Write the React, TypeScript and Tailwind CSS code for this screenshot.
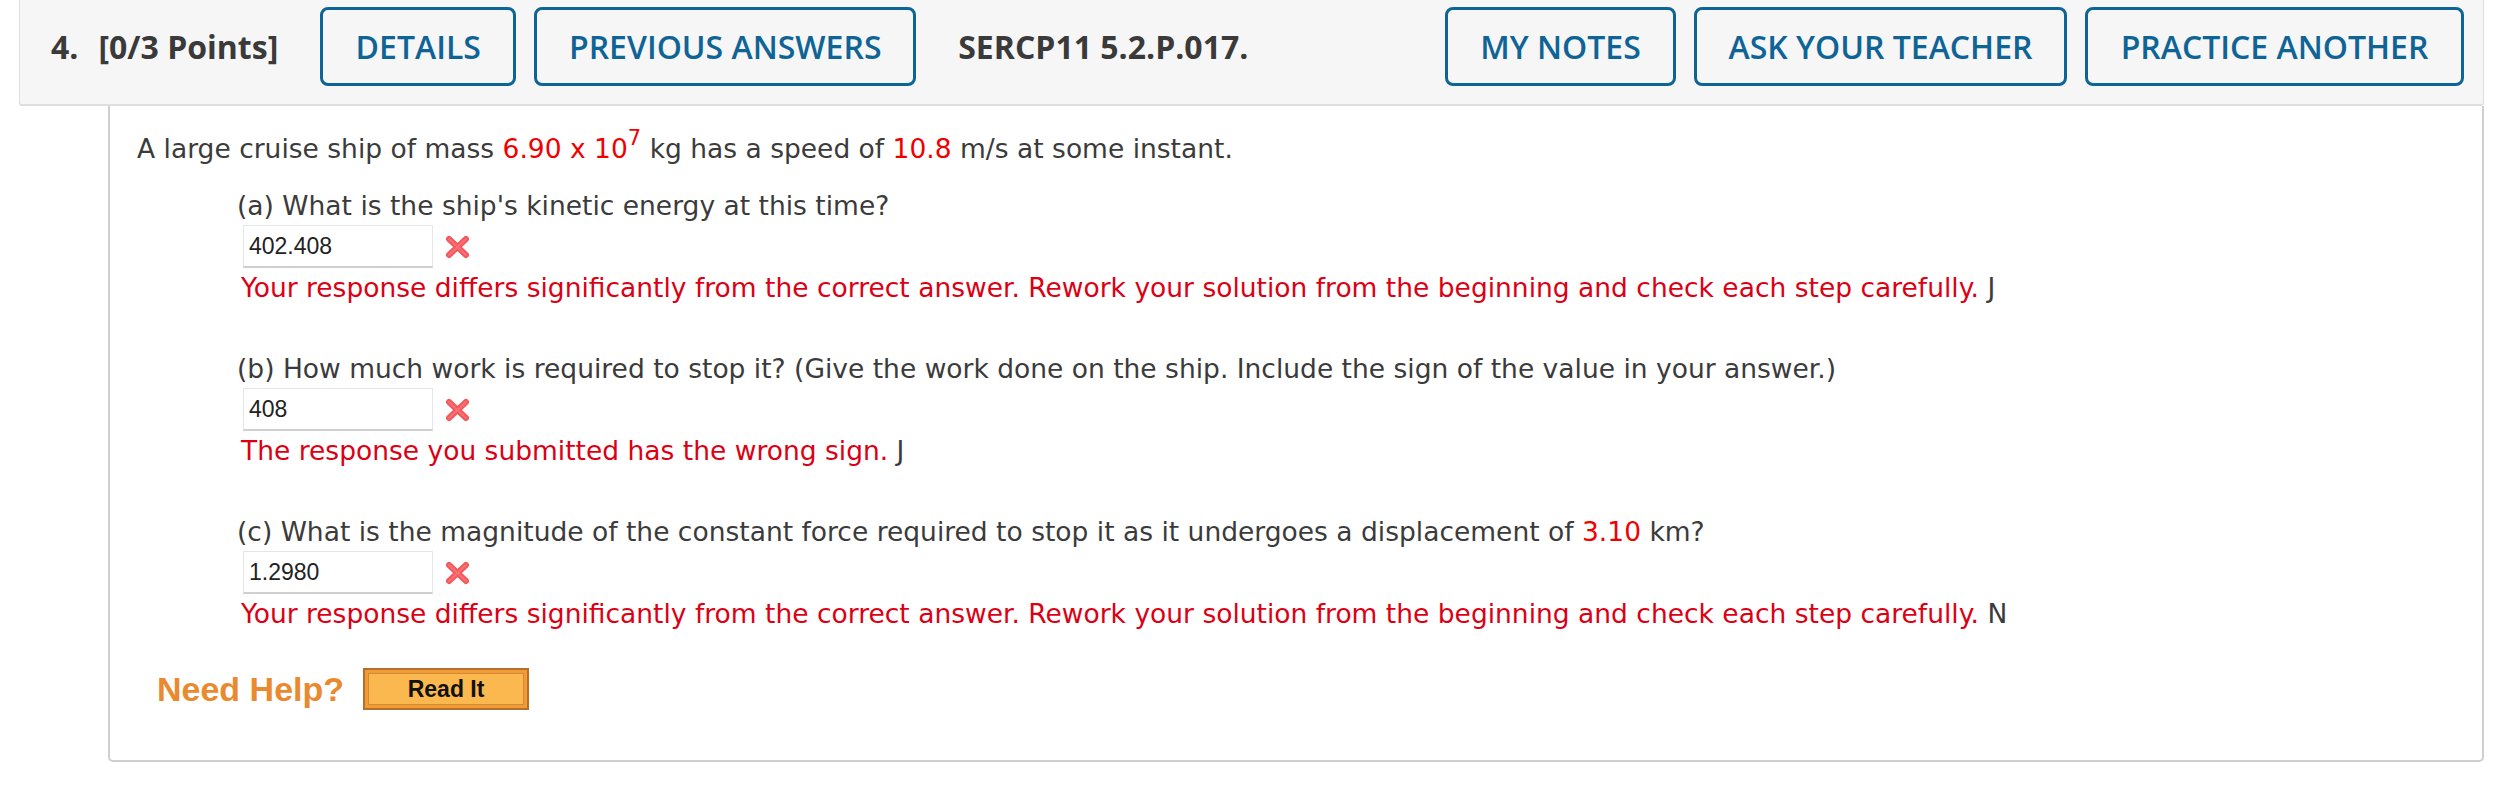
import React from "react";

function CrossMark() {
  return (
    <svg width="27" height="24" viewBox="0 0 27 24" className="shrink-0">
      <path d="M5 4 L22 20 M22 4 L5 20" stroke="#f2585c" strokeWidth="6" strokeLinecap="round" />
      <path d="M5 4 L22 20 M22 4 L5 20" stroke="#ff8a8c" strokeWidth="2" strokeLinecap="round" opacity="0.5" />
    </svg>
  );
}

function HeaderButton({ label, width }: { label: string; width: string }) {
  return (
    <div
      className={`${width} h-[79px] shrink-0 flex items-center justify-center border-[3px] border-[#0f6496] rounded-[8px] text-[#0f6496] text-[32px] font-semibold`}
    >
      {label}
    </div>
  );
}

interface Part {
  question: React.ReactNode;
  answer: string;
  feedback: string;
  unit: string;
}

const parts: Part[] = [
  {
    question: "(a) What is the ship's kinetic energy at this time?",
    answer: "402.408",
    feedback:
      "Your response differs significantly from the correct answer. Rework your solution from the beginning and check each step carefully.",
    unit: "J",
  },
  {
    question:
      "(b) How much work is required to stop it? (Give the work done on the ship. Include the sign of the value in your answer.)",
    answer: "408",
    feedback: "The response you submitted has the wrong sign.",
    unit: "J",
  },
  {
    question: (
      <>
        (c) What is the magnitude of the constant force required to stop it as it undergoes a displacement of{" "}
        <span className="text-[#f20000]">3.10</span> km?
      </>
    ),
    answer: "1.2980",
    feedback:
      "Your response differs significantly from the correct answer. Rework your solution from the beginning and check each step carefully.",
    unit: "N",
  },
];

export default function App() {
  return (
    <div className="w-[2516px] h-[790px] bg-white overflow-hidden [font-family:'DejaVu_Sans',Verdana,sans-serif]">
      {/* question header */}
      <div className="ml-[19px] mr-[32px] h-[106px] bg-[#f6f6f6] border-x border-b-2 border-[#dedede] rounded-bl-[3px] rounded-br-[3px] flex items-start pt-[7px] pl-[31px] pr-[19px] [font-family:'Open_Sans',sans-serif]">
        <div className="flex items-center h-[79px]">
          <span className="text-[32px] font-bold text-[#3a3a3a]">4.</span>
          <span className="ml-[20px] text-[32px] font-bold text-[#3a3a3a]">[0/3 Points]</span>
          <div className="ml-[42px] flex gap-[18px]">
            <HeaderButton label="DETAILS" width="w-[196px]" />
            <HeaderButton label="PREVIOUS ANSWERS" width="w-[382px]" />
          </div>
          <span className="ml-[42px] text-[32px] font-bold text-[#3a3a3a]">SERCP11 5.2.P.017.</span>
        </div>
        <div className="ml-auto flex gap-[18px]">
          <HeaderButton label="MY NOTES" width="w-[231px]" />
          <HeaderButton label="ASK YOUR TEACHER" width="w-[373px]" />
          <HeaderButton label="PRACTICE ANOTHER" width="w-[379px]" />
        </div>
      </div>

      {/* question body */}
      <div className="ml-[108px] mr-[32px] h-[656px] border-x-2 border-b-2 border-[#cfcfcf] rounded-b-[5px] pl-[27px] pt-[26px] text-[26.5px] leading-[34px] text-[#3b3b3b]">
        <p>
          A large cruise ship of mass <span className="text-[#f20000]">6.90 x 10</span>
          <span className="relative -top-[13px] text-[21px] text-[#f20000]">7</span> kg has a speed of{" "}
          <span className="text-[#f20000]">10.8</span> m/s at some instant.
        </p>

        <div className="ml-[100px] mt-[21px] flex flex-col gap-[47px]">
          {parts.map((part, i) => (
            <div key={i} className="flex flex-col">
              <p>{part.question}</p>
              <div className="mt-[2px] ml-[6px] flex items-center gap-[11px]">
                <div className="w-[190px] h-[43px] bg-white border border-[#e6e6e6] border-b-2 border-b-[#cfcfcf] flex items-center pl-[5px] text-[23px] text-[#222] [font-family:'Liberation_Sans',Arial,sans-serif]">
                  {part.answer}
                </div>
                <CrossMark />
              </div>
              <p className="mt-[3px] ml-[4px]">
                <span className="text-[#dc0014]">{part.feedback}</span> {part.unit}
              </p>
            </div>
          ))}
        </div>

        <div className="mt-[37px] ml-[20px] flex items-center gap-[19px] [font-family:'Liberation_Sans',Arial,sans-serif]">
          <span className="text-[34px] font-bold text-[#ea8a2e]">Need Help?</span>
          <div className="w-[166px] h-[42px] border-2 border-[#b3702c] bg-[#f29a34] p-[3px]">
            <div className="h-full bg-[#fbb84e] border border-[#cf8a3c] flex items-center justify-center text-[23px] font-bold text-[#111]">
              Read It
            </div>
          </div>
        </div>
      </div>
    </div>
  );
}
